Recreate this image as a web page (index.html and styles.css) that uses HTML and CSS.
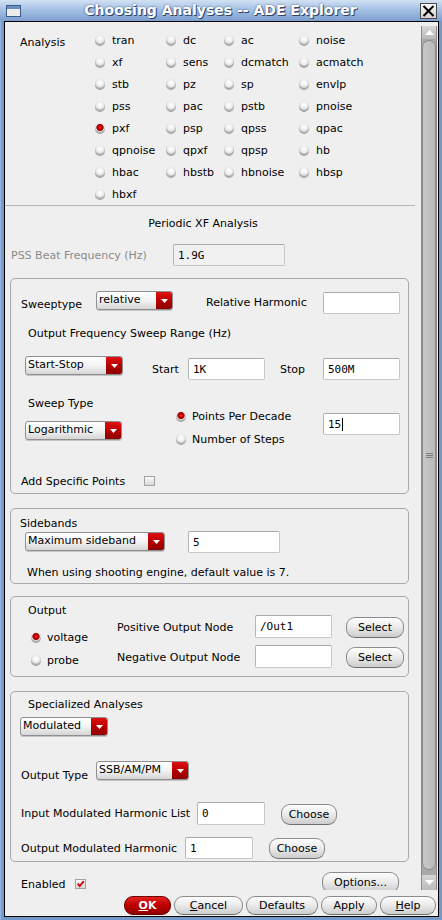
FILE: index.html
```html
<!DOCTYPE html>
<html>
<head>
<meta charset="utf-8">
<title>Choosing Analyses -- ADE Explorer</title>
<link rel="stylesheet" href="styles.css">
</head>
<body>
<div class="window">
  <div class="titlebar">
    <span class="wicon"></span>
    <span class="title">Choosing Analyses -- ADE Explorer</span>
    <span class="close"><svg width="13" height="12" viewBox="0 0 13 12"><path d="M1.5 1 L11.5 11 M11.5 1 L1.5 11" stroke="#000" stroke-width="2" fill="none"/></svg></span>
  </div>
  <div class="client">
    <div class="main">
      <div class="view">
        <div class="analysis">
          <div class="an-label">Analysis</div>
          <div class="an-grid">
            <div class="rb"><span class="radio"></span>tran</div>
            <div class="rb"><span class="radio"></span>dc</div>
            <div class="rb"><span class="radio"></span>ac</div>
            <div class="rb"><span class="radio"></span>noise</div>
            <div class="rb"><span class="radio"></span>xf</div>
            <div class="rb"><span class="radio"></span>sens</div>
            <div class="rb"><span class="radio"></span>dcmatch</div>
            <div class="rb"><span class="radio"></span>acmatch</div>
            <div class="rb"><span class="radio"></span>stb</div>
            <div class="rb"><span class="radio"></span>pz</div>
            <div class="rb"><span class="radio"></span>sp</div>
            <div class="rb"><span class="radio"></span>envlp</div>
            <div class="rb"><span class="radio"></span>pss</div>
            <div class="rb"><span class="radio"></span>pac</div>
            <div class="rb"><span class="radio"></span>pstb</div>
            <div class="rb"><span class="radio"></span>pnoise</div>
            <div class="rb"><span class="radio on"></span>pxf</div>
            <div class="rb"><span class="radio"></span>psp</div>
            <div class="rb"><span class="radio"></span>qpss</div>
            <div class="rb"><span class="radio"></span>qpac</div>
            <div class="rb"><span class="radio"></span>qpnoise</div>
            <div class="rb"><span class="radio"></span>qpxf</div>
            <div class="rb"><span class="radio"></span>qpsp</div>
            <div class="rb"><span class="radio"></span>hb</div>
            <div class="rb"><span class="radio"></span>hbac</div>
            <div class="rb"><span class="radio"></span>hbstb</div>
            <div class="rb"><span class="radio"></span>hbnoise</div>
            <div class="rb"><span class="radio"></span>hbsp</div>
            <div class="rb"><span class="radio"></span>hbxf</div>
          </div>
        </div>
        <div class="sep"></div>
        <div class="section-title">Periodic XF Analysis</div>
        <div class="pss-row">
          <span class="pss-label">PSS Beat Frequency (Hz)</span>
          <span class="field field-pss">1.9G</span>
        </div>

        <div class="group g1">
          <div class="row ra">
            <span class="lbl w-sweeptype">Sweeptype</span>
            <div class="dd dd-relative"><span class="dd-text">relative</span><span class="dd-btn"><svg width="7" height="4" viewBox="0 0 7 4"><path d="M0 0H7L3.5 4Z" fill="#fff"/></svg></span></div>
            <span class="lbl w-relharm">Relative Harmonic</span>
            <span class="field f77"></span>
          </div>
          <div class="head1">Output Frequency Sweep Range (Hz)</div>
          <div class="row rc">
            <div class="dd dd-startstop"><span class="dd-text">Start-Stop</span><span class="dd-btn"><svg width="7" height="4" viewBox="0 0 7 4"><path d="M0 0H7L3.5 4Z" fill="#fff"/></svg></span></div>
            <span class="lbl w-start">Start</span>
            <span class="field f77">1K</span>
            <span class="lbl w-stop">Stop</span>
            <span class="field f77">500M</span>
          </div>
          <div class="head2">Sweep Type</div>
          <div class="row re">
            <div class="dd dd-log"><span class="dd-text">Logarithmic</span><span class="dd-btn"><svg width="7" height="4" viewBox="0 0 7 4"><path d="M0 0H7L3.5 4Z" fill="#fff"/></svg></span></div>
            <div class="radio-col">
              <div class="rb2"><span class="radio on"></span>Points Per Decade</div>
              <div class="rb2"><span class="radio"></span>Number of Steps</div>
            </div>
            <span class="field f77">15<span class="caret"></span></span>
          </div>
          <div class="row rf">
            <span class="lbl w-addpts">Add Specific Points</span>
            <span class="check"></span>
          </div>
        </div>

        <div class="group g2">
          <div class="g2-head">Sidebands</div>
          <div class="row sb-row">
            <div class="dd dd-maxsb"><span class="dd-text">Maximum sideband</span><span class="dd-btn"><svg width="7" height="4" viewBox="0 0 7 4"><path d="M0 0H7L3.5 4Z" fill="#fff"/></svg></span></div>
            <span class="field f-sb">5</span>
          </div>
          <div class="note">When using shooting engine, default value is 7.</div>
        </div>

        <div class="group g3">
          <div class="out-left">
            <div class="out-head">Output</div>
            <div class="rb2 out-rb1"><span class="radio on"></span>voltage</div>
            <div class="rb2 out-rb2"><span class="radio"></span>probe</div>
          </div>
          <div class="out-right">
            <div class="row node-row">
              <span class="lbl w-node">Positive Output Node</span>
              <span class="field f-node">/Out1</span>
              <span class="btn btn-select">Select</span>
            </div>
            <div class="row node-row">
              <span class="lbl w-node">Negative Output Node</span>
              <span class="field f-node"></span>
              <span class="btn btn-select">Select</span>
            </div>
          </div>
        </div>

        <div class="group g4">
          <div class="g4-head">Specialized Analyses</div>
          <div class="dd dd-mod"><span class="dd-text">Modulated</span><span class="dd-btn"><svg width="7" height="4" viewBox="0 0 7 4"><path d="M0 0H7L3.5 4Z" fill="#fff"/></svg></span></div>
          <div class="row ot-row">
            <span class="lbl w-ot">Output Type</span>
            <div class="dd dd-ssb"><span class="dd-text">SSB/AM/PM</span><span class="dd-btn"><svg width="7" height="4" viewBox="0 0 7 4"><path d="M0 0H7L3.5 4Z" fill="#fff"/></svg></span></div>
          </div>
          <div class="row iml-row">
            <span class="lbl w-iml">Input Modulated Harmonic List</span>
            <span class="field f-harm">0</span>
            <span class="btn btn-choose">Choose</span>
          </div>
          <div class="row oml-row">
            <span class="lbl w-oml">Output Modulated Harmonic</span>
            <span class="field f-harm f-harm2">1</span>
            <span class="btn btn-choose btn-choose2">Choose</span>
          </div>
        </div>

        <div class="row en-row">
          <span class="lbl w-en">Enabled</span>
          <span class="check checked"><svg width="11" height="10" viewBox="0 0 11 10"><path d="M2 4.5 L4.6 7.5 L9.5 1.5" stroke="#d40000" stroke-width="2.2" fill="none"/></svg></span>
          <span class="btn btn-options">Options...</span>
        </div>
      </div>
      <div class="scrollbar">
        <div class="sb-up"><svg width="9" height="5" viewBox="0 0 9 5"><path d="M0 5H9L4.5 0Z" fill="#fff"/></svg></div>
        <div class="sb-trough">
          <div class="sb-thumb"><span class="sb-grip"></span></div>
        </div>
        <div class="sb-down"><svg width="9" height="5" viewBox="0 0 9 5"><path d="M0 0H9L4.5 5Z" fill="#fff"/></svg></div>
      </div>
    </div>
    <div class="buttonbar">
      <span class="btn btn-ok"><u>O</u>K</span>
      <span class="btn btn-cancel"><u>C</u>ancel</span>
      <span class="btn btn-defaults">Defaults</span>
      <span class="btn btn-apply">Apply</span>
      <span class="btn btn-help"><u>H</u>elp</span>
    </div>
  </div>
</div>
</body>
</html>
```

FILE: styles.css
```css
* { box-sizing: border-box; }
html, body { margin: 0; padding: 0; }
body {
  width: 442px;
  height: 920px;
  overflow: hidden;
  font-family: "DejaVu Sans", "Liberation Sans", sans-serif;
  font-size: 11px;
  line-height: 13px;
  color: #000;
  background: #7a9dcd;
}
.window {
  width: 442px;
  height: 920px;
  display: flex;
  flex-direction: column;
  background: linear-gradient(to right, #9dbbe2 0, #7498c9 2px, #7498c9 100%);
}

/* title bar */
.titlebar {
  height: 21px;
  display: flex;
  align-items: center;
  background: linear-gradient(#d2e1f3, #a6c1e4 45%, #7c9fcf);
}
.wicon {
  width: 15px;
  height: 12px;
  margin-left: 6px;
  border: 1px solid #3c5a86;
  background: linear-gradient(#6b8ec2 0, #6b8ec2 3px, #ececec 3px);
}
.title {
  flex: 1;
  text-align: center;
  font-weight: bold;
  font-size: 14px;
  line-height: 17px;
  color: #fff;
  text-shadow: 1px 1px 0 #2c446a, 0 0 2px #3b5680;
}
.close {
  width: 17px;
  height: 16px;
  margin-right: 5px;
  border: 1px solid #4a4a4a;
  background: linear-gradient(#fbfbfb, #d2d2d2);
  display: flex;
  align-items: center;
  justify-content: center;
}

/* client area */
.client {
  margin: 0 3px 3px 4px;
  height: 896px;
  border: 1px solid #000;
  background: #efefef;
  display: flex;
  flex-direction: column;
}
.main {
  height: 868px;
  display: flex;
}
.view {
  width: 416px;
  overflow: hidden;
}

/* analysis radios */
.analysis {
  display: flex;
  height: 183px;
  padding: 7px 0 0 15px;
}
.an-label {
  width: 75px;
  padding-top: 7px;
}
.an-grid {
  display: grid;
  grid-template-columns: 71px 58px 75px 60px;
  grid-auto-rows: 22px;
}
.rb {
  display: flex;
  align-items: center;
  gap: 7px;
  white-space: nowrap;
}
.radio {
  width: 10px;
  height: 10px;
  flex: none;
  border-radius: 50%;
  background: radial-gradient(circle at 50% 38%, #ffffff 0, #f1f1f1 35%, #d6d6d6 75%, #b4b4b4 100%);
  box-shadow: 0 1px 0 #a0a0a0, inset 0 -1px 1px #9a9a9a;
}
.radio.on {
  background: radial-gradient(circle at 50% 45%, #ff3a3a 0, #d00000 1.5px, #a30000 3px, #c06060 3.6px, #ededed 4px, #cfcfcf 100%);
}

.sep {
  width: 410px;
  border-top: 1px solid #b3b3b3;
}
.section-title {
  margin-top: 11px;
  line-height: 14px;
  text-align: center;
  padding-right: 20px;
}
.pss-row {
  display: flex;
  align-items: center;
  margin-top: 13px;
  padding-left: 6px;
}
.pss-label {
  width: 162px;
  color: #8b8b8b;
}

/* fields */
.field {
  height: 22px;
  background: #fff;
  border: 1px solid #c7c7c7;
  border-top-color: #a9a9a9;
  border-left-color: #b5b5b5;
  border-radius: 2px;
  font-family: "DejaVu Sans Mono", "Liberation Mono", monospace;
  font-size: 11px;
  padding-left: 4px;
  display: flex;
  align-items: center;
  flex: none;
}
.field-pss {
  width: 112px;
  background: #f1f1f1;
}
.f77 { width: 77px; }
.caret {
  width: 1px;
  height: 13px;
  background: #000;
  margin-left: 1px;
}

/* dropdowns */
.dd {
  display: flex;
  height: 19px;
  flex: none;
  border: 1px solid #8f8f8f;
  border-radius: 3px;
  background: linear-gradient(#ffffff, #f3f3f3 50%, #d5d5d5);
  overflow: hidden;
  box-shadow: 0 1px 0 #c4c4c4;
}
.dd-text {
  flex: 1;
  padding-left: 2px;
  line-height: 16px;
  white-space: nowrap;
}
.dd-btn {
  width: 16px;
  background: linear-gradient(#e01010, #b80000 50%, #8c0000);
  display: flex;
  align-items: center;
  justify-content: center;
}

/* buttons */
.btn {
  height: 21px;
  flex: none;
  border: 1px solid #8b8b8b;
  border-bottom-color: #6f6f6f;
  border-radius: 9px;
  background: linear-gradient(#fdfdfd, #ececec 45%, #cdcdcd);
  display: flex;
  align-items: center;
  justify-content: center;
  white-space: nowrap;
}

/* groups */
.group {
  margin-left: 5px;
  width: 399px;
  border: 1px solid #a8a8a8;
  border-radius: 5px;
}
.row {
  display: flex;
  align-items: flex-start;
}
.lbl {
  flex: none;
  white-space: nowrap;
}
.check {
  width: 11px;
  height: 10px;
  flex: none;
  border: 1px solid #a3a3a3;
  background: linear-gradient(#fafafa, #d8d8d8);
  display: flex;
  align-items: center;
  justify-content: center;
}

/* group 1 */
.g1 { margin-top: 12px; }
.ra { margin-top: 11px; height: 25px; padding-left: 10px; }
.w-sweeptype { width: 75px; margin-top: 8px; }
.dd-relative { width: 77px; margin-top: 1px; }
.w-relharm { width: 117px; margin-left: 33px; margin-top: 6px; }
.ra .field { margin-top: 2px; }
.head1 { height: 40px; padding: 12px 0 0 17px; }
.rc { height: 27px; padding-left: 14px; }
.dd-startstop { width: 98px; margin-top: 1px; }
.w-start { width: 36px; margin-left: 29px; margin-top: 8px; }
.w-stop { width: 43px; margin-left: 15px; margin-top: 8px; }
.rc .field { margin-top: 3px; }
.head2 { height: 28px; padding: 15px 0 0 17px; }
.re { height: 38px; padding-left: 14px; }
.dd-log { width: 97px; margin-top: 11px; }
.radio-col {
  width: 147px;
  margin-left: 54px;
  margin-top: 0;
  display: flex;
  flex-direction: column;
  gap: 11px;
}
.rb2 {
  height: 12px;
  display: flex;
  align-items: center;
  gap: 6px;
  white-space: nowrap;
}
.re .field { margin-top: 3px; }
.rf { height: 45px; padding-left: 10px; }
.w-addpts { width: 123px; margin-top: 27px; }
.rf .check { margin-top: 28px; }

/* group 2 */
.g2 { margin-top: 14px; padding-bottom: 4px; }
.g2-head { padding: 8px 0 0 9px; }
.sb-row { margin-top: 1px; padding-left: 14px; height: 22px; }
.dd-maxsb { width: 140px; margin-top: 1px; }
.f-sb { width: 92px; margin-left: 23px; }
.note { margin-top: 13px; padding-left: 16px; }

/* group 3 */
.g3 { margin-top: 12px; display: flex; padding-bottom: 8px; }
.out-left { width: 106px; padding-top: 7px; }
.out-head { padding-left: 17px; }
.out-rb1 { margin: 14px 0 0 20px; }
.out-rb2 { margin: 11px 0 0 20px; }
.out-right {
  padding-top: 18px;
  display: flex;
  flex-direction: column;
  gap: 7px;
}
.node-row { height: 23px; }
.w-node { width: 138px; margin-top: 6px; }
.f-node { width: 77px; height: 23px; }
.btn-select { width: 58px; margin-left: 14px; margin-top: 2px; }

/* group 4 */
.g4 { margin-top: 14px; padding-bottom: 2px; }
.g4-head { padding: 6px 0 0 17px; }
.dd-mod { width: 88px; margin: 6px 0 0 9px; }
.ot-row { margin-top: 25px; padding-left: 10px; height: 19px; }
.w-ot { width: 75px; margin-top: 8px; }
.dd-ssb { width: 93px; }
.iml-row { margin-top: 22px; padding-left: 10px; height: 23px; }
.w-iml { width: 176px; margin-top: 5px; }
.f-harm { width: 68px; height: 23px; }
.btn-choose { width: 56px; margin-left: 16px; margin-top: 2px; }
.oml-row { margin-top: 12px; padding-left: 10px; height: 22px; }
.w-oml { width: 164px; margin-top: 5px; }
.f-harm2 { height: 22px; }
.btn-choose2 { margin-top: 1px; }

/* enabled row */
.en-row { margin-top: 10px; padding-left: 16px; }
.w-en { width: 54px; margin-top: 8px; line-height: 10px; }
.check.checked { margin-top: 7px; }
.btn-options { width: 77px; margin-left: auto; margin-right: 22px; }

/* scrollbar */
.scrollbar {
  width: 16px;
  margin-top: 4px;
  display: flex;
  flex-direction: column;
  background: #a8a8a8;
  border-left: 1px solid #8c8c8c;
  border-right: 1px solid #8c8c8c;
}
.sb-up, .sb-down {
  display: flex;
  align-items: center;
  justify-content: center;
  background: linear-gradient(#d6d6d6, #bababa);
}
.sb-up { height: 13px; }
.sb-down { height: 15px; }
.sb-trough {
  flex: 1;
  padding: 1px 0 5px 0;
}
.sb-thumb {
  height: 100%;
  border: 1px solid #8a8a8a;
  border-radius: 7px;
  background: linear-gradient(to right, #c8c8c8, #bababa);
  display: flex;
  align-items: center;
  justify-content: center;
}
.sb-grip {
  width: 7px;
  height: 5px;
  border-top: 1px solid #7d7d7d;
  border-bottom: 1px solid #7d7d7d;
  background: linear-gradient(transparent 1px, #7d7d7d 1px, #7d7d7d 2px, transparent 2px);
}

/* bottom buttons */
.buttonbar {
  flex: 1;
  display: flex;
  justify-content: flex-end;
  gap: 3px;
  padding: 6px 2px 0 0;
}
.buttonbar .btn { height: 19px; }
.btn-ok {
  width: 47px;
  background: linear-gradient(#e42222, #c00000 45%, #920000);
  border-color: #6e0000;
  color: #fff;
  font-weight: bold;
}
.btn-cancel { width: 69px; }
.btn-defaults { width: 72px; }
.btn-apply { width: 56px; }
.btn-help { width: 56px; }
```
